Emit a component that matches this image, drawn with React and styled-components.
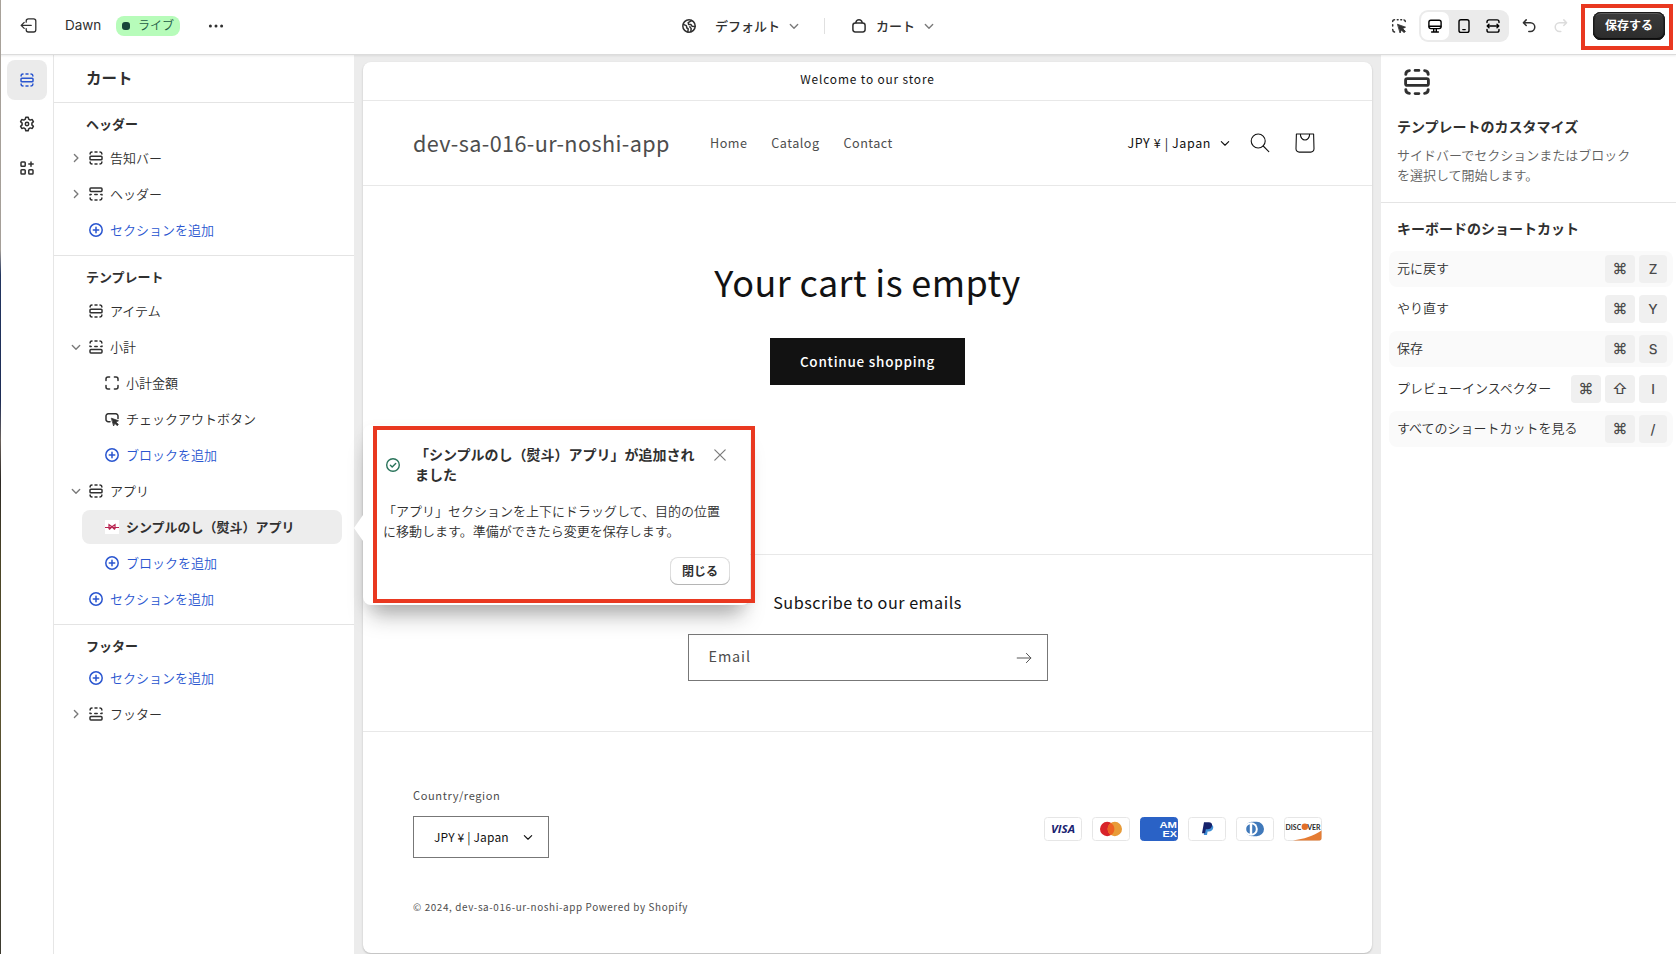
import React from 'react'
import styled, { createGlobalStyle, css } from 'styled-components'

const UI_FONT = `Inter, 'Noto Sans CJK JP', sans-serif`;
const STORE_FONT = `'Noto Sans CJK JP', 'Noto Sans', sans-serif`;

const GlobalStyle = createGlobalStyle`
  * {
    box-sizing: border-box;
  }
  body {
    margin: 0;
    overflow: hidden;
    font-family: ${UI_FONT};
    font-size: 13px;
    font-weight: 350;
    line-height: 20px;
    color: #303030;
    background: #fff;
  }
  h1, h2, h3, p {
    margin: 0;
  }
  button {
    font-family: inherit;
    border: 0;
    padding: 0;
    cursor: pointer;
  }
  svg {
    display: block;
    flex: none;
  }
`;

const Page = styled.div`
  position: relative;
  display: flex;
  flex-direction: column;
  width: 1676px;
  height: 954px;
  overflow: hidden;
  background: #fff;
`;
const EdgeStrip = styled.div`
  position: absolute;
  left: 0;
  top: 0;
  width: 1px;
  height: 100%;
  z-index: 5;
  background: linear-gradient(#a8a29a 0, #a59f98 250px, #22355f 275px, #1d2c56 400px, #6b625c 440px, #2c2824 480px, #4a4426 560px, #5b5330 720px, #3c3a30 954px);
`;

/* top bar */
const TopBar = styled.header`
  position: relative;
  z-index: 2;
  display: flex;
  align-items: center;
  height: 55px;
  flex: none;
  padding: 0 3px 3px 19px;
  background: #fff;
  border-bottom: 1px solid #dcdcdc;
  box-shadow: 0 1px 2px rgba(0, 0, 0, 0.08);
`;
const BarGroup = styled.div`
  display: flex;
  align-items: center;
  ${({ $width }) => $width && css`width: ${$width}px;`}
`;
const ThemeName = styled.span`
  width: 35px;
  margin: 0 16px 0 26px;
  padding-bottom: 1px;
  font-size: 13.5px;
  font-weight: 400;
  white-space: nowrap;
`;
const LiveBadge = styled.span`
  display: flex;
  align-items: center;
  gap: 8px;
  width: 64px;
  height: 20px;
  padding-left: 6px;
  margin-right: 28px;
  border-radius: 8px;
  background: #b7fcba;
  color: #1d5a45;
  font-size: 12px;
  white-space: nowrap;

  &::before {
    content: '';
    width: 8px;
    height: 8px;
    border-radius: 3px;
    background: #17463a;
  }
`;
const PickerButton = styled.button`
  display: flex;
  align-items: center;
  gap: 6px;
  background: none;
  color: #303030;
  font-size: 13px;
  font-weight: 500;
  line-height: 20px;
  white-space: nowrap;
`;
const PickerLabel = styled.span`
  margin-left: ${({ $indent }) => $indent}px;
`;
const BarDivider = styled.span`
  width: 1px;
  height: 16px;
  margin: 0 24px 0 22px;
  background: #e0e0e0;
`;
const Segmented = styled.div`
  display: flex;
  align-items: center;
  gap: 1px;
  width: 90px;
  height: 32px;
  padding: 2px;
  margin: 0 10px;
  border-radius: 9px;
  background: #ebebeb;
`;
const Segment = styled.button`
  display: grid;
  place-items: center;
  width: 28px;
  height: 28px;
  border-radius: 7px;
  background: ${({ $active }) => ($active ? '#fff' : 'transparent')};
`;
const History = styled.div`
  display: flex;
  gap: 12px;
`;
const SaveFrame = styled.div`
  display: flex;
  justify-content: flex-end;
  width: 92px;
  height: 46px;
  margin: 3px 0 0 10px;
  padding: 4px 4px 0 0;
  border: 4px solid #e93820;
`;
const SaveButton = styled.button`
  width: 72px;
  height: 28px;
  padding-bottom: 3px;
  border-radius: 8px;
  background: linear-gradient(#3c3c3c, #2b2b2b);
  box-shadow: inset 0 0 0 1px #1a1a1a, inset 0 2px 0 #5c5c5c, inset 0 -2px 0 #0c0c0c, inset 2px 0 0 #262626, inset -2px 0 0 #262626;
  color: #fff;
  font-size: 12px;
  font-weight: 600;
`;

/* body */
const Body = styled.div`
  display: flex;
  flex: 1;
  min-height: 0;
`;
const Rail = styled.nav`
  display: flex;
  flex-direction: column;
  gap: 4px;
  width: 54px;
  flex: none;
  padding: 5px 0 0 7px;
  border-right: 1px solid #e6e6e6;
`;
const RailButton = styled.button`
  display: grid;
  place-items: center;
  width: 40px;
  height: 40px;
  border-radius: 8px;
  background: ${({ $active }) => ($active ? '#ebebeb' : 'transparent')};
  color: ${({ $active }) => ($active ? '#2a56d0' : '#303030')};
`;
const Sidebar = styled.aside`
  width: 300px;
  flex: none;
  background: #fff;
`;
const SidebarTitle = styled.h2`
  height: 48px;
  padding: 13px 0 0 32px;
  border-bottom: 1px solid #e4e4e4;
  font-size: 15.5px;
  font-weight: 600;
  line-height: 21px;
`;
const Group = styled.section`
  display: flex;
  flex-direction: column;
  padding-bottom: 7px;

  & + & {
    border-top: 1px solid #e4e4e4;
  }
`;
const GroupTitle = styled.h3`
  height: ${({ $short }) => ($short ? 35 : 37)}px;
  padding: 11px 0 0 32px;
  font-size: 13px;
  font-weight: 600;
`;
const TreeRow = styled.div`
  display: flex;
  align-items: center;
  height: 34px;
  margin: 1px 12px 1px ${({ $nested }) => ($nested ? 28 : 12)}px;
  border-radius: 8px;
  white-space: nowrap;
  color: ${({ $link }) => ($link ? '#2a56d0' : '#303030')};

  ${({ $selected }) => $selected && css`
    background: #ededed;
    font-weight: 600;
  `}
`;
const RowLabel = styled.span`
  padding-bottom: 1px;
`;
const ChevronSlot = styled.span`
  display: grid;
  place-items: center;
  width: 20px;
  color: #7a7a7a;
`;
const IconSlot = styled.span`
  display: grid;
  place-items: center;
  width: 20px;
  height: 20px;
  margin-right: 4px;
`;
const AppThumb = styled.span`
  display: grid;
  place-items: center;
  width: 14px;
  height: 14px;
  background: #fff;
`;

/* storefront preview */
const Canvas = styled.main`
  width: 1027px;
  flex: none;
  padding: 7px 9px 1px;
  background: #ececec;
`;
const Store = styled.div`
  display: flex;
  flex-direction: column;
  height: 891px;
  border-radius: 8px;
  overflow: hidden;
  background: #fff;
  box-shadow: 0 1px 2px rgba(0, 0, 0, 0.22);
  color: #121212;
  font-family: ${STORE_FONT};
  font-weight: 400;
`;
const Announcement = styled.div`
  height: 39px;
  padding-top: 7px;
  border-bottom: 1px solid #e8e8e8;
  font-size: 11.9px;
  letter-spacing: 0.85px;
  text-align: center;
`;
const StoreHeader = styled.div`
  display: flex;
  align-items: center;
  height: 85px;
  padding: 0 57px 0 50px;
  border-bottom: 1px solid #e8e8e8;
`;
const StoreName = styled.span`
  width: 297px;
  font-size: 21.6px;
  letter-spacing: 0.41px;
  line-height: 30px;
  color: #4d4d4d;
`;
const StoreNav = styled.nav`
  display: flex;
  gap: 24px;
  flex: 1;
  color: #4d4d4d;
  font-size: 12.6px;
  letter-spacing: 0.48px;
`;
const Currency = styled.button`
  display: flex;
  align-items: center;
  gap: ${({ $compact }) => ($compact ? 11 : 6)}px;
  padding-bottom: 2px;
  background: none;
  color: #121212;
  font-size: ${({ $compact }) => ($compact ? 12 : 12.5)}px;
  letter-spacing: ${({ $compact }) => ($compact ? 0.16 : 0.6)}px;
  white-space: nowrap;

  svg {
    position: relative;
    top: 1px;
  }
`;
const HeaderIcons = styled.div`
  display: flex;
  align-items: center;
  gap: 25px;
  margin-left: 17px;
`;
const CartEmpty = styled.section`
  display: flex;
  flex-direction: column;
  align-items: center;
  height: 368px;
  padding-top: 68px;
`;
const CartHeading = styled.h1`
  font-size: 36px;
  font-weight: 400;
  line-height: 54px;
  letter-spacing: 0.4px;
`;
const ShopButton = styled.button`
  width: 195px;
  height: 47px;
  margin-top: 30px;
  padding-bottom: 2px;
  background: #121212;
  color: #fff;
  font-size: 13.5px;
  font-weight: 500;
  letter-spacing: 0.75px;
`;
const Newsletter = styled.section`
  display: flex;
  flex-direction: column;
  align-items: center;
  height: 177px;
  padding-top: 35px;
  border-top: 1px solid #e8e8e8;
`;
const NewsletterTitle = styled.h2`
  font-size: 16.2px;
  font-weight: 400;
  line-height: 24px;
  letter-spacing: 0.5px;
`;
const EmailField = styled.div`
  display: flex;
  align-items: center;
  justify-content: space-between;
  width: 360px;
  height: 47px;
  margin-top: 20px;
  padding: 0 15px 0 20px;
  border: 1px solid #777;
  color: #4d4d4d;
  font-size: 14.4px;
  letter-spacing: 0.9px;
`;
const Placeholder = styled.span`
  padding-bottom: 3px;
`;
const Footer = styled.footer`
  flex: 1;
  padding: 53px 50px 0;
  border-top: 1px solid #e8e8e8;
  color: #4d4d4d;
`;
const FooterLabel = styled.p`
  font-size: 11.1px;
  letter-spacing: 0.6px;
`;
const FooterRow = styled.div`
  display: flex;
  justify-content: space-between;
  margin-top: 11px;
`;
const CountrySelect = styled.div`
  display: flex;
  align-items: center;
  width: 136px;
  height: 42px;
  padding-left: 20px;
  border: 1px solid #777;
`;
const Payments = styled.div`
  display: flex;
  gap: 10px;
  margin-top: 1px;
`;
const Copyright = styled.p`
  margin-top: 39px;
  font-size: 9.9px;
  letter-spacing: 0.62px;
`;

/* inspector */
const Inspector = styled.aside`
  flex: 1;
  background: #fff;
`;
const Intro = styled.section`
  height: 148px;
  padding: 8px 20px 0 16px;
  border-bottom: 1px solid #e4e4e4;

  svg {
    margin: 0 0 16px 1px;
  }
`;
const InspectorTitle = styled.h2`
  font-size: 14px;
  font-weight: 600;
  line-height: 20px;
  white-space: nowrap;
`;
const IntroText = styled.p`
  width: 240px;
  margin-top: 8px;
  color: #616161;
`;
const Shortcuts = styled.section`
  display: flex;
  flex-direction: column;
  gap: 4px;
  padding: 16px 3px 0 8px;
`;
const ShortcutsTitle = styled(InspectorTitle)`
  margin: 0 0 8px 8px;
`;
const ShortcutRow = styled.div`
  display: flex;
  align-items: center;
  gap: 4px;
  height: 36px;
  padding: 0 6px 0 8px;
  border-radius: 8px;
  background: ${({ $shaded }) => ($shaded ? '#fafafa' : 'transparent')};
`;
const ShortcutLabel = styled.span`
  flex: 1;
  padding-bottom: 2px;
  white-space: nowrap;
`;
const Key = styled.kbd`
  display: grid;
  place-items: center;
  width: ${({ $wide }) => ($wide ? 30 : 28)}px;
  height: 28px;
  border-radius: 4px;
  background: #f0f0f0;
  color: #4a4a4a;
  font-family: ${UI_FONT};
  font-size: ${({ $wide }) => ($wide ? 15 : 13.5)}px;
  font-weight: 500;
`;

/* notice popover */
const Popover = styled.div`
  position: absolute;
  z-index: 3;
  left: 363px;
  top: 425px;
  width: 387px;
  height: 180px;
  padding: 20px 20px 0;
  border-radius: 8px;
  background: #fff;
  box-shadow: 0 18px 20px -8px rgba(26, 26, 26, 0.34), 0 4px 14px rgba(26, 26, 26, 0.06);

  &::before {
    content: '';
    position: absolute;
    left: -9px;
    top: 90px;
    border: solid transparent;
    border-width: 13px 9px 13px 0;
    border-right-color: #fff;
  }
`;
const Highlight = styled.div`
  position: absolute;
  z-index: 4;
  left: 373px;
  top: 426px;
  width: 382px;
  height: 177px;
  border: 4px solid #e93820;
`;
const PopoverHead = styled.div`
  display: flex;
  align-items: flex-start;
`;
const PopoverTitle = styled.h3`
  width: 284px;
  margin: 0 15px 0 12px;
  font-size: 14px;
  font-weight: 600;
  line-height: 20px;
`;
const CheckSlot = styled.span`
  margin-top: 10px;
`;
const PopoverText = styled.p`
  margin-top: 16px;
  width: 340px;
`;
const PopoverActions = styled.div`
  display: flex;
  justify-content: flex-end;
  margin-top: 16px;
`;
const CloseButton = styled.button`
  width: 60px;
  height: 28px;
  padding-bottom: 2px;
  border-radius: 8px;
  background: #fff;
  box-shadow: inset 0 -1px 0 #b5b5b5, inset 0 0 0 1px #dedede;
  color: #303030;
  font-size: 12px;
  font-weight: 600;
`;

/* icons */
const Icon = ({ size = 20, width = 1.5, color = 'currentColor', children }) => (
  <svg width={size} height={size} viewBox="0 0 20 20" fill="none" stroke={color} strokeWidth={width} strokeLinecap="round" strokeLinejoin="round">
    {children}
  </svg>
);
const CURSOR = 'M0 0l7 2.5-2.6 1.3 2.5 2.5-1.2 1.2-2.5-2.5-1 2.5z';

const SectionIcon = (props) => (
  <Icon {...props}>
    <rect x="4" y="8.2" width="12" height="3.6" rx="0.9" />
    <path d="M4.1 6c0-1.2.7-1.9 1.9-2M9 3.9h2M14 4c1.2.1 1.9.8 1.9 2M4.1 14c0 1.2.7 1.9 1.9 2M9 16.1h2M14 16c1.2-.1 1.9-.8 1.9-2" />
  </Icon>
);
const HeaderIcon = () => (
  <Icon>
    <rect x="4" y="4" width="12" height="3.4" rx="0.9" />
    <path d="M4 11v-.6h1.2M8.8 10.4h2.4M14.8 10.4H16v.6M4.1 14c0 1.2.7 1.9 1.9 2M9 16.1h2M14 16c1.2-.1 1.9-.8 1.9-2" />
  </Icon>
);
const FooterIcon = () => (
  <Icon>
    <rect x="4" y="12.6" width="12" height="3.4" rx="0.9" />
    <path d="M4 9v.6h1.2M8.8 9.6h2.4M14.8 9.6H16V9M4.1 6c0-1.2.7-1.9 1.9-2M9 3.9h2M14 4c1.2.1 1.9.8 1.9 2" />
  </Icon>
);
const BlockIcon = () => (
  <Icon>
    <path d="M4 7.6V6a2 2 0 0 1 2-2h1.6M12.4 4H14a2 2 0 0 1 2 2v1.6M16 12.4V14a2 2 0 0 1-2 2h-1.6M7.6 16H6a2 2 0 0 1-2-2v-1.6" />
  </Icon>
);
const ButtonIcon = () => (
  <Icon>
    <path d="M8 12.7H6.2A2.2 2.2 0 0 1 4 10.5V7a2.2 2.2 0 0 1 2.2-2.2h7.6A2.2 2.2 0 0 1 16 7v2.4" />
    <path d={CURSOR} transform="translate(9.6 9.3) scale(0.98)" fill="currentColor" strokeWidth="0.8" />
  </Icon>
);
const PlusCircleIcon = () => (
  <Icon>
    <circle cx="10" cy="10" r="6.2" />
    <path d="M10 7.3v5.4M7.3 10h5.4" />
  </Icon>
);
const ChevronRight = () => (
  <Icon size={16} width={1.7}>
    <path d="M8 5.6l4.4 4.4L8 14.4" />
  </Icon>
);
const ChevronDown = ({ width = 1.7, color }) => (
  <Icon size={16} width={width} color={color}>
    <path d="M5.4 8.2l4.6 4.6 4.6-4.6" />
  </Icon>
);
const ExitIcon = () => (
  <Icon width={1.3}>
    <path d="M7.2 6.2V5a2.2 2.2 0 0 1 2.2-2.2h5.2A2.2 2.2 0 0 1 16.8 5v8.8a2.2 2.2 0 0 1-2.2 2.2H9.4a2.2 2.2 0 0 1-2.2-2.2v-1.2M12.2 9.4H2.2M5.2 6.4l-3 3 3 3" />
  </Icon>
);
const DotsIcon = () => (
  <svg width="16" height="16" viewBox="0 0 16 16" fill="#303030">
    <circle cx="2.4" cy="8" r="1.5" />
    <circle cx="8" cy="8" r="1.5" />
    <circle cx="13.6" cy="8" r="1.5" />
  </svg>
);
const GlobeIcon = () => (
  <Icon>
    <circle cx="10" cy="10" r="6.2" />
    <path d="M4.3 8.4l3 1.2.6 2.4 1.3.8-.4 3.2M12.6 4.6l-3.4 2 .4 1.8 2.4.2 1 1.6 3 .4M11.8 15.6l.4-3-1.4-1.8" />
  </Icon>
);
const BagIcon = () => (
  <Icon>
    <rect x="3.9" y="7" width="12.2" height="9" rx="2.4" />
    <path d="M6.8 6.8c.3-1.9 1.5-3 3.2-3s2.9 1.1 3.2 3" />
  </Icon>
);
const GearIcon = () => (
  <Icon>
    <path d="M8.8 3.2h2.4l.5 2 1.5.9 2-.6 1.2 2.1-1.5 1.5v1.8l1.5 1.5-1.2 2.1-2-.6-1.5.9-.5 2H8.8l-.5-2-1.5-.9-2 .6-1.2-2.1 1.5-1.5V9.1L3.6 7.6l1.2-2.1 2 .6 1.5-.9z" />
    <circle cx="10" cy="10" r="1.7" />
  </Icon>
);
const AppsIcon = () => (
  <Icon>
    <rect x="4" y="4" width="4.2" height="4.2" rx="0.8" />
    <rect x="4" y="11.8" width="4.2" height="4.2" rx="0.8" />
    <rect x="11.8" y="11.8" width="4.2" height="4.2" rx="0.8" />
    <path d="M14 3.9v4.4M11.8 6.1h4.4" />
  </Icon>
);
const InspectIcon = () => (
  <Icon>
    <path d="M3.7 5.6c0-1.2.6-1.8 1.8-1.8M8.3 3.8h.8M11.8 3.8h.8M15 3.9c.9.1 1.3.6 1.3 1.7M3.7 8.8V10M3.7 13.5c0 1.5.5 2.2 1.8 2.5" />
    <path d={CURSOR} transform="translate(8.8 8.4) scale(1.1)" fill="currentColor" strokeWidth="0.8" />
  </Icon>
);
const DesktopIcon = () => (
  <Icon width={1.4}>
    <rect x="3.9" y="4.2" width="12.2" height="8.4" rx="2" />
    <path d="M4.2 10.2h11.6M8.7 12.8v2.8M11.3 12.8v2.8M6.6 16h6.8" />
  </Icon>
);
const MobileIcon = () => (
  <Icon width={1.4}>
    <rect x="5" y="3.8" width="10" height="12.6" rx="2" />
    <path d="M8.8 13.6h2.4" />
  </Icon>
);
const FullWidthIcon = () => (
  <Icon width={1.4}>
    <path d="M4 6.6v-.8a1.9 1.9 0 0 1 1.9-1.9h8.2A1.9 1.9 0 0 1 16 5.8v.8M4 13.4v.8a1.9 1.9 0 0 0 1.9 1.9h8.2a1.9 1.9 0 0 0 1.9-1.9v-.8M4.2 10h11.6M6 8.2L4.2 10 6 11.8M14 8.2l1.8 1.8-1.8 1.8" />
  </Icon>
);
const UndoIcon = () => (
  <Icon>
    <path d="M7.2 3.9L4.4 6.7l2.8 2.8M4.8 6.7h6.6a4.2 4.2 0 0 1 0 8.8H9.8" />
  </Icon>
);
const RedoIcon = () => (
  <Icon color="#dcdcdc">
    <path d="M12.8 3.9l2.8 2.8-2.8 2.8M15.2 6.7H8.6a4.2 4.2 0 0 0 0 8.8h1.2" />
  </Icon>
);
const SearchIcon = () => (
  <Icon width={1.1}>
    <circle cx="8.2" cy="8" r="7" />
    <path d="M13.2 13l5.6 5.6" />
  </Icon>
);
const CartIcon = () => (
  <Icon width={1.1}>
    <path d="M1.4 1h17.2l.4 14.8a3.2 3.2 0 0 1-3.2 3.3H4.2A3.2 3.2 0 0 1 1 15.8zM5.4 1.2a4.6 5.8 0 0 0 9.2 0" />
  </Icon>
);
const ArrowIcon = () => (
  <Icon size={16} width={1.2}>
    <path d="M1.5 10h17M13 4.2l5.6 5.8-5.6 5.8" />
  </Icon>
);
const CheckCircleIcon = () => (
  <Icon width={1.4} color="#29735a">
    <circle cx="10" cy="10" r="6.3" />
    <path d="M7.4 10.3l1.8 1.7 3.5-3.6" />
  </Icon>
);
const CloseIcon = () => (
  <Icon width={1.2} color="#7a7a7a">
    <path d="M4.8 4.8l10.4 10.4M15.2 4.8L4.8 15.2" />
  </Icon>
);
const RibbonIcon = () => (
  <svg width="14" height="14" viewBox="0 0 14 14" fill="none" stroke="#b82350">
    <path d="M0 7.5h4M10 7.5h4" strokeWidth="1.2" />
    <path d="M7 6.8L4 4.6v3.6zM7 6.8l3-2.2v3.6zM6.8 7L4.2 9.6M7.2 7l2.6 2.6" strokeWidth="1.2" />
  </svg>
);

const Card = ({ fill = '#fff', stroke = '#e6e6e6', children }) => (
  <svg width="38" height="24" viewBox="0 0 38 24">
    <rect x="0.5" y="0.5" width="37" height="23" rx="3" fill={fill} stroke={stroke} />
    {children}
  </svg>
);

const PaymentCards = () => (
  <Payments>
    <Card>
      <text x="7" y="16" textLength="24" lengthAdjust="spacingAndGlyphs" fontFamily="Open Sans" fontWeight="700" fontStyle="italic" fontSize="11" fill="#1a1f71">VISA</text>
    </Card>
    <Card>
      <circle cx="15.2" cy="12" r="7.2" fill="#d8232a" />
      <circle cx="22.8" cy="12" r="7.2" fill="#e89b38" />
      <path d="M19 5.9a7.2 7.2 0 0 1 0 12.2 7.2 7.2 0 0 1 0-12.2z" fill="#ee6023" />
    </Card>
    <Card fill="#2a62c6" stroke="#2a62c6">
      <text x="19.5" y="11.4" textLength="17.5" lengthAdjust="spacingAndGlyphs" fontFamily="Liberation Sans" fontWeight="700" fontSize="9.5" fill="#fff">AM</text>
      <text x="22.5" y="20" textLength="14.5" lengthAdjust="spacingAndGlyphs" fontFamily="Liberation Sans" fontWeight="700" fontSize="9.5" fill="#fff">EX</text>
    </Card>
    <Card>
      <path d="M17.7 7.5h4.5c2.2 0 3.5 1.3 3 3.5-.5 2.3-2 3.4-4.3 3.4h-1.3L19 18h-3.2z" fill="#3f8fd6" />
      <path d="M16 5.3h4.8c2.4 0 3.7 1.2 3.2 3.5-.5 2.4-2.1 3.5-4.5 3.5h-1.7l-.7 4H14z" fill="#16226b" />
    </Card>
    <Card>
      <path d="M17 4.8h3.8a7.2 7.2 0 0 1 0 14.4H17z" fill="#4079ba" />
      <circle cx="16" cy="12" r="7.2" fill="#4079ba" />
      <circle cx="15" cy="12" r="6.8" fill="#fff" />
      <path d="M13.8 7.2a5 5 0 0 0 0 9.6zM16.2 7.2a5 5 0 0 1 0 9.6z" fill="#4079ba" />
    </Card>
    <Card>
      <path d="M37.5 13.5v8a2 2 0 0 1-2 2H9c11-1.5 20-4.5 28.500-10z" fill="#e57c33" />
      <circle cx="20.8" cy="9.8" r="3.2" fill="#e26f28" />
      <text x="1.6" y="12.8" textLength="15.6" lengthAdjust="spacingAndGlyphs" fontFamily="Lato" fontWeight="700" fontSize="7.8" fill="#2b2b2b">DISC</text>
      <text x="23.2" y="12.8" textLength="13.4" lengthAdjust="spacingAndGlyphs" fontFamily="Lato" fontWeight="700" fontSize="7.8" fill="#2b2b2b">VER</text>
    </Card>
  </Payments>
);

const groups = [
  {
    title: 'ヘッダー',
    rows: [
      { label: '告知バー', icon: <SectionIcon />, chevron: 'right' },
      { label: 'ヘッダー', icon: <HeaderIcon />, chevron: 'right' },
      { label: 'セクションを追加', link: true },
    ],
  },
  {
    title: 'テンプレート',
    rows: [
      { label: 'アイテム', icon: <SectionIcon /> },
      { label: '小計', icon: <FooterIcon />, chevron: 'down' },
      { label: '小計金額', icon: <BlockIcon />, nested: true },
      { label: 'チェックアウトボタン', icon: <ButtonIcon />, nested: true },
      { label: 'ブロックを追加', link: true, nested: true },
      { label: 'アプリ', icon: <SectionIcon />, chevron: 'down' },
      { label: 'シンプルのし（熨斗）アプリ', icon: <AppThumb><RibbonIcon /></AppThumb>, nested: true, selected: true },
      { label: 'ブロックを追加', link: true, nested: true },
      { label: 'セクションを追加', link: true },
    ],
  },
  {
    title: 'フッター',
    short: true,
    rows: [
      { label: 'セクションを追加', link: true },
      { label: 'フッター', icon: <FooterIcon />, chevron: 'right' },
    ],
  },
];

const shortcuts = [
  { label: '元に戻す', keys: ['⌘', 'Z'] },
  { label: 'やり直す', keys: ['⌘', 'Y'] },
  { label: '保存', keys: ['⌘', 'S'] },
  { label: 'プレビューインスペクター', keys: ['⌘', '⇧', 'I'] },
  { label: 'すべてのショートカットを見る', keys: ['⌘', '/'] },
];

function Tree() {
  return groups.map((group) => (
    <Group key={group.title}>
      <GroupTitle $short={group.short}>{group.title}</GroupTitle>
      {group.rows.map((row, i) => (
        <TreeRow key={i} $nested={row.nested} $link={row.link} $selected={row.selected}>
          <ChevronSlot>
            {row.chevron === 'right' && <ChevronRight />}
            {row.chevron === 'down' && <ChevronDown />}
          </ChevronSlot>
          <IconSlot>{row.link ? <PlusCircleIcon /> : row.icon}</IconSlot>
          <RowLabel>{row.label}</RowLabel>
        </TreeRow>
      ))}
    </Group>
  ));
}

function App() {
  return (
    <Page>
      <GlobalStyle />
      <EdgeStrip />
      <TopBar>
        <BarGroup $width={660}>
          <ExitIcon />
          <ThemeName>Dawn</ThemeName>
          <LiveBadge>ライブ</LiveBadge>
          <DotsIcon />
        </BarGroup>
        <BarGroup $width={710}>
          <PickerButton>
            <GlobeIcon />
            <PickerLabel $indent={10}>デフォルト</PickerLabel>
            <ChevronDown color="#7a7a7a" />
          </PickerButton>
          <BarDivider />
          <PickerButton>
            <BagIcon />
            <PickerLabel $indent={1}>カート</PickerLabel>
            <ChevronDown color="#7a7a7a" />
          </PickerButton>
        </BarGroup>
        <BarGroup>
          <InspectIcon />
          <Segmented>
            <Segment $active><DesktopIcon /></Segment>
            <Segment><MobileIcon /></Segment>
            <Segment><FullWidthIcon /></Segment>
          </Segmented>
          <History>
            <UndoIcon />
            <RedoIcon />
          </History>
          <SaveFrame>
            <SaveButton>保存する</SaveButton>
          </SaveFrame>
        </BarGroup>
      </TopBar>

      <Body>
        <Rail>
          <RailButton $active><SectionIcon /></RailButton>
          <RailButton><GearIcon /></RailButton>
          <RailButton><AppsIcon /></RailButton>
        </Rail>

        <Sidebar>
          <SidebarTitle>カート</SidebarTitle>
          <Tree />
        </Sidebar>

        <Canvas>
          <Store>
            <Announcement>Welcome to our store</Announcement>
            <StoreHeader>
              <StoreName>dev-sa-016-ur-noshi-app</StoreName>
              <StoreNav>
                <span>Home</span>
                <span>Catalog</span>
                <span>Contact</span>
              </StoreNav>
              <Currency>
                JPY ¥ | Japan
                <ChevronDown width={1.4} />
              </Currency>
              <HeaderIcons>
                <SearchIcon />
                <CartIcon />
              </HeaderIcons>
            </StoreHeader>
            <CartEmpty>
              <CartHeading>Your cart is empty</CartHeading>
              <ShopButton>Continue shopping</ShopButton>
            </CartEmpty>
            <Newsletter>
              <NewsletterTitle>Subscribe to our emails</NewsletterTitle>
              <EmailField>
                <Placeholder>Email</Placeholder>
                <ArrowIcon />
              </EmailField>
            </Newsletter>
            <Footer>
              <FooterLabel>Country/region</FooterLabel>
              <FooterRow>
                <CountrySelect>
                  <Currency $compact>
                    JPY ¥ | Japan
                    <ChevronDown width={1.4} />
                  </Currency>
                </CountrySelect>
                <PaymentCards />
              </FooterRow>
              <Copyright>© 2024, dev-sa-016-ur-noshi-app Powered by Shopify</Copyright>
            </Footer>
          </Store>
        </Canvas>

        <Inspector>
          <Intro>
            <SectionIcon size={38} />
            <InspectorTitle>テンプレートのカスタマイズ</InspectorTitle>
            <IntroText>サイドバーでセクションまたはブロックを選択して開始します。</IntroText>
          </Intro>
          <Shortcuts>
            <ShortcutsTitle>キーボードのショートカット</ShortcutsTitle>
            {shortcuts.map((item, i) => (
              <ShortcutRow key={item.label} $shaded={i % 2 === 0}>
                <ShortcutLabel>{item.label}</ShortcutLabel>
                {item.keys.map((key) => (
                  <Key key={key} $wide={key === '⌘' || key === '⇧'}>{key}</Key>
                ))}
              </ShortcutRow>
            ))}
          </Shortcuts>
        </Inspector>
      </Body>

      <Popover>
        <PopoverHead>
          <CheckSlot><CheckCircleIcon /></CheckSlot>
          <PopoverTitle>「シンプルのし（熨斗）アプリ」が追加されました</PopoverTitle>
          <CloseIcon />
        </PopoverHead>
        <PopoverText>「アプリ」セクションを上下にドラッグして、目的の位置に移動します。準備ができたら変更を保存します。</PopoverText>
        <PopoverActions>
          <CloseButton>閉じる</CloseButton>
        </PopoverActions>
      </Popover>
      <Highlight />
    </Page>
  )
}

export default App
